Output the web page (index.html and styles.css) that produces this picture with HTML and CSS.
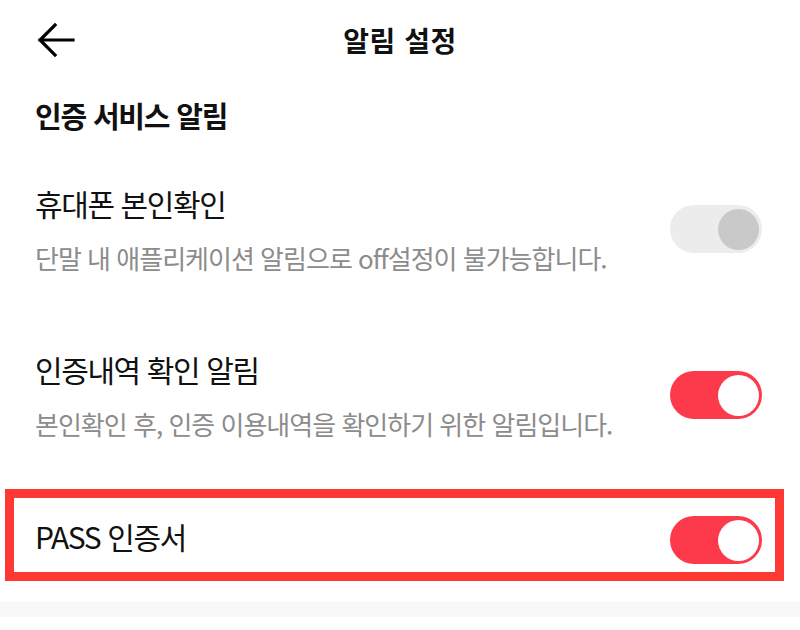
FILE: index.html
```html
<!DOCTYPE html>
<html lang="ko">
<head>
    <meta charset="UTF-8">
    <meta name="viewport" content="width=device-width, initial-scale=1.0">
    <title>알림 설정</title>
    <link rel="stylesheet" href="styles.css">
</head>
<body>
    <div class="topbar">
        <button class="back" aria-label="뒤로">
            <svg width="40" height="40" viewBox="0 0 40 40">
                <path d="M37 20 H4 M19 5 L4 20 L19 35" fill="none" stroke="#000" stroke-width="3.2" stroke-linecap="square"/>
            </svg>
        </button>
        <h1>알림 설정</h1>
    </div>

    <h2 class="section-title">인증 서비스 알림</h2>

    <div class="item">
        <div class="item-text">
            <div class="item-name">휴대폰 본인확인</div>
            <div class="item-desc">단말 내 애플리케이션 알림으로 off설정이 불가능합니다.</div>
        </div>
        <span class="toggle disabled"><span class="knob"></span></span>
    </div>

    <div class="item">
        <div class="item-text">
            <div class="item-name">인증내역 확인 알림</div>
            <div class="item-desc">본인확인 후, 인증 이용내역을 확인하기 위한 알림입니다.</div>
        </div>
        <span class="toggle on"><span class="knob"></span></span>
    </div>

    <div class="item highlight">
        <div class="item-text">
            <div class="item-name">PASS 인증서</div>
        </div>
        <span class="toggle on"><span class="knob"></span></span>
    </div>

    <div class="divider"></div>
</body>
</html>
```

FILE: styles.css
```css
body {
    font-family: 'Noto Sans CJK KR', 'Noto Sans', sans-serif;
    margin: 0;
    padding: 0;
    background-color: #fff;
    color: #111;
}

.topbar {
    height: 80px;
    display: flex;
    align-items: center;
    justify-content: center;
    position: relative;
}

.back {
    position: absolute;
    left: 36px;
    top: 20px;
    padding: 0;
    border: none;
    background: none;
    width: 40px;
    height: 40px;
}

.topbar h1 {
    margin: 0;
    font-size: 28px;
    font-weight: 700;
    line-height: 34px;
    letter-spacing: 0.5px;
}

.section-title {
    margin: 18px 0 15px;
    padding-left: 35px;
    font-size: 29px;
    font-weight: 700;
    line-height: 34px;
    letter-spacing: -1.2px;
}

.item {
    display: flex;
    align-items: center;
    justify-content: space-between;
    padding: 36px 38px 36px 35px;
}

.item + .item {
    padding-top: 38px;
}

.item-name {
    font-size: 30px;
    line-height: 40px;
    letter-spacing: -1.4px;
}

.item-desc {
    margin-top: 18px;
    font-size: 26px;
    line-height: 34px;
    color: #8c8c8c;
    letter-spacing: -1px;
}

.item.highlight {
    align-items: flex-start;
    margin: 12px 16px 0 5px;
    padding: 18px 13px 8px 21px;
    border: 9px solid #fe3833;
}

.toggle {
    flex: none;
    width: 92px;
    height: 48px;
    border-radius: 24px;
    background-color: #ececec;
    display: flex;
    align-items: center;
    justify-content: flex-end;
    padding: 0 3px;
    box-sizing: border-box;
}

.toggle .knob {
    width: 41px;
    height: 41px;
    border-radius: 50%;
    background-color: #c9c9c9;
}

.toggle.on {
    background-color: #fd3a4b;
}

.toggle.on .knob {
    background-color: #fff;
}

.divider {
    margin-top: 21px;
    height: 15px;
    background-color: #f7f8fa;
}
```
